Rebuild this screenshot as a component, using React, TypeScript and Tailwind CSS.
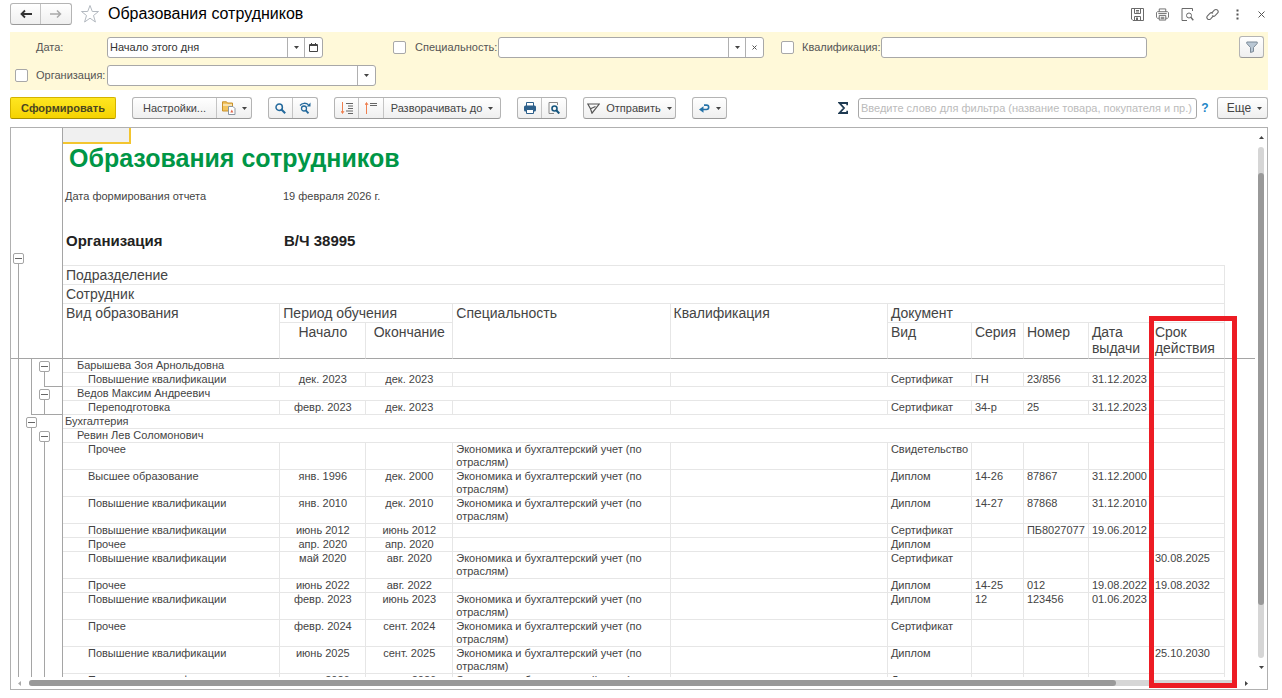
import React from "react";
import clsx from "clsx";

type Doc = {
  kind: string;
  start?: string;
  end?: string;
  speciality?: string;
  doc: string;
  series?: string;
  number?: string;
  issued?: string;
  expires?: string;
};

type Row = { group: string; level: 0 | 1 } | Doc;

const ECONOMICS = "Экономика и бухгалтерский учет (по отраслям)";

const rows: Row[] = [
  { group: "Барышева Зоя Арнольдовна", level: 1 },
  { kind: "Повышение квалификации", start: "дек. 2023", end: "дек. 2023", doc: "Сертификат", series: "ГН", number: "23/856", issued: "31.12.2023" },
  { group: "Ведов Максим Андреевич", level: 1 },
  { kind: "Переподготовка", start: "февр. 2023", end: "дек. 2023", doc: "Сертификат", series: "34-р", number: "25", issued: "31.12.2023" },
  { group: "Бухгалтерия", level: 0 },
  { group: "Ревин Лев Соломонович", level: 1 },
  { kind: "Прочее", speciality: ECONOMICS, doc: "Свидетельство" },
  { kind: "Высшее образование", start: "янв. 1996", end: "дек. 2000", speciality: ECONOMICS, doc: "Диплом", series: "14-26", number: "87867", issued: "31.12.2000" },
  { kind: "Повышение квалификации", start: "янв. 2010", end: "дек. 2010", speciality: ECONOMICS, doc: "Диплом", series: "14-27", number: "87868", issued: "31.12.2010" },
  { kind: "Повышение квалификации", start: "июнь 2012", end: "июнь 2012", doc: "Сертификат", number: "ПБ8027077", issued: "19.06.2012" },
  { kind: "Прочее", start: "апр. 2020", end: "апр. 2020", doc: "Диплом" },
  { kind: "Повышение квалификации", start: "май 2020", end: "авг. 2020", speciality: ECONOMICS, doc: "Сертификат", expires: "30.08.2025" },
  { kind: "Прочее", start: "июнь 2022", end: "авг. 2022", doc: "Диплом", series: "14-25", number: "012", issued: "19.08.2022", expires: "19.08.2032" },
  { kind: "Повышение квалификации", start: "февр. 2023", end: "июнь 2023", speciality: ECONOMICS, doc: "Диплом", series: "12", number: "123456", issued: "01.06.2023" },
  { kind: "Прочее", start: "февр. 2024", end: "сент. 2024", speciality: ECONOMICS, doc: "Сертификат" },
  { kind: "Повышение квалификации", start: "июнь 2025", end: "сент. 2025", speciality: ECONOMICS, doc: "Диплом", expires: "25.10.2030" },
  { kind: "Повышение квалификации", start: "июнь 2026", end: "июнь 2026", speciality: ECONOMICS, doc: "Диплом" },
];

function Caret({ className = "" }: { className?: string }) {
  return (
    <svg className={clsx("h-[3px] w-[5px] shrink-0", className)} viewBox="0 0 5 3" fill="#444">
      <path d="M0 0h5L2.5 3z" />
    </svg>
  );
}

function ToolButton({ label, className, children }: { label?: string; className?: string; children: React.ReactNode }) {
  return (
    <button
      type="button"
      aria-label={label}
      className={clsx("flex h-5 items-center justify-center gap-1.5 whitespace-nowrap", className)}
    >
      {children}
    </button>
  );
}

function ToolGroup({ className, children }: { className?: string; children: React.ReactNode }) {
  return (
    <div
      className={clsx(
        "flex shrink-0 divide-x divide-[#c4c4c4] rounded-[3px] border border-[#b4b4b4] border-b-[#999] bg-linear-to-b from-white to-[#efefef]",
        className,
      )}
    >
      {children}
    </div>
  );
}

function Field({ id, value = "", className, children }: { id: string; value?: string; className?: string; children?: React.ReactNode }) {
  return (
    <div className={clsx("flex h-[21px] divide-x divide-[#b0b0b0] rounded-[3px] border border-[#a8a8a8] bg-white", className)}>
      <input id={id} type="text" defaultValue={value} className="min-w-0 flex-1 bg-transparent px-0.5 text-[#333] outline-none" />
      {children}
    </div>
  );
}

function FieldButton({ label, children }: { label: string; children: React.ReactNode }) {
  return (
    <button type="button" aria-label={label} className="flex w-[17px] items-center justify-center">
      {children}
    </button>
  );
}

function FilterCheck({ label }: { label: string }) {
  return (
    <input
      type="checkbox"
      aria-label={label}
      className="h-[13px] w-[13px] shrink-0 appearance-none rounded-[2px] border border-[#a8a8a8] bg-white"
    />
  );
}

function TitleBar() {
  return (
    <header className="flex h-7 items-center pr-px">
      <ToolGroup>
        <ToolButton label="Назад" className="w-[30px]">
          <svg className="h-2.5 w-3" viewBox="0 0 12 10" fill="none" stroke="#333" strokeWidth="1.8">
            <path d="M5 1.500 1.500 5 5 8.500M1.500 5H12" />
          </svg>
        </ToolButton>
        <ToolButton label="Вперед" className="w-[30px]">
          <svg className="h-2.5 w-3" viewBox="0 0 12 10" fill="none" stroke="#a9a9a9" strokeWidth="1.5">
            <path d="M7 1.500 10.500 5 7 8.500M10.500 5H0" />
          </svg>
        </ToolButton>
      </ToolGroup>
      <button type="button" aria-label="Избранное" className="ml-2">
        <svg className="h-5 w-5" viewBox="0 0 20 20" fill="none" stroke="#b3b9c0" strokeWidth="1">
          <path d="M10 1.500l2.300 6h6.200l-5 4 1.900 6.500L10 14.200 4.600 18l1.900-6.500-5-4h6.200z" />
        </svg>
      </button>
      <h1 className="ml-2 text-base text-black">Образования сотрудников</h1>

      <div className="ml-auto flex items-center gap-3 text-[#6a6a6a]">
        <button type="button" aria-label="Сохранить">
          <svg className="h-[13px] w-[13px]" viewBox="0 0 13 13" fill="none" stroke="currentColor">
            <path d="M.5.5h12v12H2L.5 11zM3.500.5v5h6v-5M5 2.500h3M5 4h3M3.500 12.500v-4h6v4" />
            <path d="M5 9.500h2v2.500H5z" fill="currentColor" stroke="none" />
          </svg>
        </button>
        <button type="button" aria-label="Печать">
          <svg className="h-[13px] w-[13px]" viewBox="0 0 14 13" fill="none" stroke="currentColor">
            <path d="M3.500 3.500v-3h7v3M3.500 10.500h-2l-1-1v-5l1-1h11l1 1v5l-1 1h-2M3.500 7.500h7v5h-7zM2.500 5.500h9M5 9.500h4M5 11h4" />
          </svg>
        </button>
        <button type="button" aria-label="Предварительный просмотр">
          <svg className="h-[13px] w-[13px]" viewBox="0 0 13 13" fill="none" stroke="currentColor">
            <path d="M6 12.500H1V.5h10.500V3" />
            <circle cx="8" cy="7.500" r="2.500" />
            <path d="M9.800 9.300 12.300 12.300" strokeWidth="1.400" />
          </svg>
        </button>
        <button type="button" aria-label="Получить ссылку">
          <svg className="h-[13px] w-[13px]" viewBox="0 0 14 14" fill="none" stroke="currentColor" strokeWidth="1.200">
            <path d="M6 5.500 9 2.300c1-1 2.500-1 3.400 0s.9 2.300 0 3.200L9.800 8.200c-1 1-2.300.9-3.200.1" />
            <path d="M8 8.500 5 11.700c-1 1-2.500 1-3.400 0s-.9-2.300 0-3.200l2.600-2.700c1-1 2.300-.9 3.200-.1" />
          </svg>
        </button>
        <button type="button" aria-label="Дополнительно" className="flex w-3 justify-center">
          <svg className="h-[11px] w-[3px]" viewBox="0 0 3 11" fill="#555">
            <path d="M.5.5h2v2h-2zM.5 4.500h2v2h-2zM.5 8.500h2v2h-2z" />
          </svg>
        </button>
        <button type="button" aria-label="Закрыть" className="flex w-3 justify-center">
          <svg className="h-[7px] w-[7px]" viewBox="0 0 7 7" stroke="#555">
            <path d="M.5.5l6 6M6.500.5l-6 6" />
          </svg>
        </button>
      </div>
    </header>
  );
}

function Filters() {
  return (
    <section className="mt-1 flex flex-col gap-[7px] bg-[#fff9d9] py-1 pr-1 text-[#555]">
      <div className="flex items-center">
        <label htmlFor="date" className="w-[97px] pl-[26px]">Дата:</label>
        <Field id="date" value="Начало этого дня" className="w-[216px]">
          <FieldButton label="Выбрать из списка"><Caret /></FieldButton>
          <FieldButton label="Календарь">
            <svg className="h-[9px] w-[9px]" viewBox="0 0 9 9" fill="none" stroke="#444">
              <path d="M.5 1.500h8v7h-8z" />
              <path d="M.5 2.500h8M2.500 0v2M6.500 0v2" />
            </svg>
          </FieldButton>
        </Field>
        <div className="ml-[70px] flex items-center">
          <FilterCheck label="Отбор по специальности" />
          <label htmlFor="speciality" className="ml-[9px] w-[83px]">Специальность:</label>
          <Field id="speciality" className="w-[266px]">
            <FieldButton label="Выбрать из списка"><Caret /></FieldButton>
            <FieldButton label="Очистить">
              <svg className="h-[5px] w-[5px]" viewBox="0 0 5 5" stroke="#555">
                <path d="M.5.5l4 4M4.500.5l-4 4" />
              </svg>
            </FieldButton>
          </Field>
        </div>
        <div className="ml-[17px] flex items-center">
          <FilterCheck label="Отбор по квалификации" />
          <label htmlFor="qualification" className="ml-2 w-[79px]">Квалификация:</label>
          <Field id="qualification" className="w-[266px]" />
        </div>
        <ToolGroup className="ml-auto">
          <ToolButton label="Настройка отбора" className="w-[23px]">
            <svg className="h-3 w-3" viewBox="0 0 12 12" fill="#b9c7d4" stroke="#7d8b98">
              <path d="M.8 1h10.400v1.500L7.500 6.500v4l-3 1v-5L.8 2.500z" />
            </svg>
          </ToolButton>
        </ToolGroup>
      </div>
      <div className="flex items-center pl-[5px]">
        <FilterCheck label="Отбор по организации" />
        <label htmlFor="organization" className="w-[79px] pl-2">Организация:</label>
        <Field id="organization" className="w-[269px]">
          <FieldButton label="Выбрать из списка"><Caret /></FieldButton>
        </Field>
      </div>
    </section>
  );
}

function Toolbar() {
  return (
    <div className="flex items-center pt-[7px] pb-2 text-[#444]">
      <button
        type="button"
        className="h-[22px] w-[106px] shrink-0 rounded-[2px] border border-[#d3b300] border-b-[#a88f00] bg-linear-to-b from-[#ffe61f] to-[#f5d300] font-bold text-[#4a4520]"
      >
        Сформировать
      </button>
      <ToolGroup className="ml-4">
        <ToolButton className="w-[84px]">Настройки...</ToolButton>
        <ToolButton label="Варианты отчета" className="w-[34px]">
          <svg className="h-[14px] w-[14px]" viewBox="0 0 14 14">
            <path d="M.5 2V.8h4L5.500 2h5v8H.5z" fill="#f3c45d" stroke="#c8912c" />
            <path d="M1 4h9" stroke="#fff" />
            <path d="M6.500 5.500h4.500l2 2v6H6.500z" fill="#fff" stroke="#8b95a0" />
            <path d="M8.300 11.500 9.800 8.500l1.500 3z" fill="#e0664c" />
          </svg>
          <Caret />
        </ToolButton>
      </ToolGroup>
      <ToolGroup className="ml-4">
        <ToolButton label="Найти" className="w-6">
          <svg className="h-[11px] w-[11px]" viewBox="0 0 11 11" fill="none" stroke="#23699c">
            <circle cx="4.200" cy="4.200" r="3.200" strokeWidth="1.500" />
            <path d="M6.500 6.500 10.200 10.200" strokeWidth="2" />
          </svg>
        </ToolButton>
        <ToolButton label="Найти далее" className="w-6">
          <svg className="h-3 w-3" viewBox="0 0 12 12" fill="none" stroke="#23699c">
            <circle cx="5" cy="6.500" r="2.500" strokeWidth="1.300" />
            <path d="M6.800 8.300 9.500 11.300" strokeWidth="1.800" />
            <path d="M1 3.500C3 .8 7 .5 9.500 2.800" strokeWidth="1.300" />
            <path d="M11.500.5v4H7.800z" fill="#23699c" stroke="none" />
          </svg>
        </ToolButton>
      </ToolGroup>
      <ToolGroup className="ml-4">
        <ToolButton label="Развернуть группы" className="w-6">
          <svg className="h-3 w-3" viewBox="0 0 12 12" fill="none" stroke="#666">
            <path d="M1.500 0v11M0 9l1.500 2.500L3 9" stroke="#ef7f4f" />
            <path d="M5 1.500h7M7 4h5M7 6.500h5M5 9h7M7 11.500h5" />
          </svg>
        </ToolButton>
        <ToolButton label="Свернуть группы" className="w-[25px]">
          <svg className="h-3 w-3" viewBox="0 0 12 12" fill="none" stroke="#666">
            <path d="M1.500 12V1M0 3 1.500.5 3 3" stroke="#ef7f4f" />
            <path d="M5 1.500h7M5 3.500h7" />
          </svg>
        </ToolButton>
        <ToolButton className="w-[116px]">Разворачивать до <Caret /></ToolButton>
      </ToolGroup>
      <ToolGroup className="ml-4">
        <ToolButton label="Печать" className="w-6">
          <svg className="h-3 w-3" viewBox="0 0 12 12">
            <path d="M2.500 4V.5h7V4" fill="#fff" stroke="#2c5f8a" />
            <rect y="3.500" width="12" height="6" rx="1.500" fill="#2c5f8a" />
            <path d="M2.500 7.500h7v4h-7z" fill="#fff" stroke="#2c5f8a" />
          </svg>
        </ToolButton>
        <ToolButton label="Просмотр" className="w-6">
          <svg className="h-3 w-3" viewBox="0 0 12 12" fill="none">
            <path d="M6 11.500H1V.5h8.500V3" stroke="#888" />
            <circle cx="6.500" cy="6.500" r="2.500" stroke="#17577f" strokeWidth="1.600" />
            <path d="M8.300 8.300 11.300 11.500" stroke="#17577f" strokeWidth="2" />
          </svg>
        </ToolButton>
      </ToolGroup>
      <ToolGroup className="ml-4">
        <ToolButton className="w-[91px]">
          <svg className="h-[11px] w-[13px] shrink-0" viewBox="0 0 13 11" fill="none" stroke="#555" strokeWidth="1.200">
            <path d="M.8 1h11.400L5 10.200 3.500 5.800zM3.500 5.800 8.500 3.500" />
          </svg>
          Отправить <Caret />
        </ToolButton>
      </ToolGroup>
      <ToolGroup className="ml-4">
        <ToolButton label="Навигация" className="w-[33px]">
          <svg className="h-[9px] w-[11px]" viewBox="0 0 11 9" fill="none" stroke="#2472a8" strokeWidth="1.600">
            <path d="M2 5.500h5.500a2.200 2.200 0 0 0 0-4.400H5" />
            <path d="M4.500 2.200v6.500L0 5.500z" fill="#2472a8" stroke="none" />
          </svg>
          <Caret />
        </ToolButton>
      </ToolGroup>

      <div className="ml-auto flex items-center text-xs">
        <svg className="h-3 w-2.5" viewBox="0 0 10 12" fill="none" stroke="#1f3a52" strokeWidth="1.800">
          <path d="M9.200 3.200V1H1.500L6 6l-4.500 5h7.700V8.800" />
        </svg>
        <input
          type="text"
          aria-label="Фильтр"
          placeholder="Введите слово для фильтра (название товара, покупателя и пр.)"
          className="ml-2.5 h-[21px] w-[339px] rounded-[3px] border border-[#a8a8a8] px-0.5 text-[11px] outline-none placeholder:text-[#bbb]"
        />
        <button type="button" className="w-5 pr-1 font-bold text-[#1f86c7]">?</button>
        <ToolGroup>
          <ToolButton className="w-[49px] pl-1">Еще <Caret /></ToolButton>
        </ToolGroup>
      </div>
    </div>
  );
}

function Fold() {
  return (
    <button
      type="button"
      aria-label="Свернуть"
      className="flex h-[11px] w-[11px] shrink-0 items-center justify-center rounded-[2px] border border-[#a5a5a5] bg-white"
    >
      <span className="h-px w-[7px] bg-[#666]" />
    </button>
  );
}

// One vertical lane of the grouping tree, 11px wide with the line in its middle
function Lane({ children }: { children: React.ReactNode }) {
  return <div className="flex w-[11px] shrink-0 flex-col">{children}</div>;
}

function Outline() {
  const line = "ml-[5px] border-l border-[#a5a5a5]";
  return (
    <div className="flex w-[52px] shrink-0 flex-col border-r border-[#a5a5a5]">
      <div className="h-[231px] shrink-0 border-b border-[#a5a5a5] pt-[125px] pl-0.5">
        <div className="flex h-full">
          <Lane>
            <Fold />
            <div className={clsx(line, "flex-1")} />
          </Lane>
        </div>
      </div>
      <div className="flex min-h-0 flex-1 gap-0.5 pl-0.5">
        <Lane>
          <div className={clsx(line, "flex-1")} />
        </Lane>
        <Lane>
          <div className={clsx(line, "h-14 w-[31px] border-b")} />
          <div className="h-0.5" />
          <Fold />
          <div className={clsx(line, "flex-1")} />
        </Lane>
        <Lane>
          <div className="h-0.5" />
          <Fold />
          <div className={clsx(line, "h-[15px] w-[18px] border-b")} />
          <div className="h-0.5" />
          <Fold />
          <div className={clsx(line, "h-[15px]")} />
          <div className="h-4" />
          <Fold />
          <div className={clsx(line, "flex-1")} />
        </Lane>
      </div>
    </div>
  );
}

const cell = "border-r border-b border-[#e6e6e6] px-[3px] align-top";

function DocRow({ row }: { row: Doc }) {
  return (
    <tr>
      <td className="border-r border-b border-[#e6e6e6] pr-[3px] pl-[25px] align-top">{row.kind}</td>
      <td className={clsx(cell, "text-center")}>{row.start}</td>
      <td className={clsx(cell, "text-center")}>{row.end}</td>
      <td className={cell}>{row.speciality && <div className="max-w-[190px]">{row.speciality}</div>}</td>
      <td className={cell} />
      <td className={cell}>{row.doc}</td>
      <td className={cell}>{row.series}</td>
      <td className={cell}>{row.number}</td>
      <td className={cell}>{row.issued}</td>
      <td className={cell}>{row.expires}</td>
      <td />
    </tr>
  );
}

function ReportTable() {
  const frozen = "border-r border-r-[#e6e6e6] border-b border-b-[#a5a5a5] px-[3px] align-top";
  return (
    <table className="w-full table-fixed border-separate border-spacing-0 text-left text-[11px] leading-[13px] whitespace-nowrap">
      <colgroup>
        <col />
        <col className="w-[86px]" />
        <col className="w-[87px]" />
        <col />
        <col />
        <col className="w-[84px]" />
        <col className="w-[52px]" />
        <col className="w-[65px]" />
        <col className="w-[63px]" />
        <col className="w-[73px]" />
        <col className="w-[30px]" />
      </colgroup>
      <thead className="text-sm leading-[18px] text-[#444] [&_th]:font-normal">
        <tr>
          <th colSpan={10} className="border-t border-r border-b border-[#e6e6e6] px-[3px]">Подразделение</th>
          <th />
        </tr>
        <tr>
          <th colSpan={10} className={cell}>Сотрудник</th>
          <th />
        </tr>
        <tr>
          <th rowSpan={2} className={frozen}>Вид образования</th>
          <th colSpan={2} className={cell}>Период обучения</th>
          <th rowSpan={2} className={frozen}>Специальность</th>
          <th rowSpan={2} className={frozen}>Квалификация</th>
          <th colSpan={5} className={cell}>Документ</th>
          <th />
        </tr>
        <tr className="h-9 leading-4 [&>th]:pt-px">
          <th className={clsx(frozen, "text-center")}>Начало</th>
          <th className={clsx(frozen, "text-center")}>Окончание</th>
          <th className={frozen}>Вид</th>
          <th className={frozen}>Серия</th>
          <th className={frozen}>Номер</th>
          <th className={frozen}>Дата<br />выдачи</th>
          <th className={frozen}>Срок<br />действия</th>
          <th className="border-b border-[#a5a5a5]" />
        </tr>
      </thead>
      <tbody className="text-[#444] [&_td]:whitespace-normal">
        {rows.map((row, i) =>
          "group" in row ? (
            <tr key={i}>
              <td colSpan={10} className={clsx("border-r border-b border-[#e6e6e6]", row.level ? "pl-3.5" : "pl-0.5")}>
                {row.group}
              </td>
              <td />
            </tr>
          ) : (
            <DocRow key={i} row={row} />
          ),
        )}
      </tbody>
    </table>
  );
}

function VerticalScroll() {
  return (
    <div className="flex w-3 shrink-0 flex-col items-center pt-2">
      <svg className="h-[3px] w-[5px]" viewBox="0 0 5 3" fill="#444"><path d="M0 3h5L2.500 0z" /></svg>
      <div className="mt-2 flex w-1.5 flex-1 flex-col rounded-full bg-[#d6d6d6] pt-[26px]">
        <div className="h-[89%] rounded-full bg-[#999]" />
      </div>
      <Caret className="mt-2 mb-2" />
    </div>
  );
}

function HorizontalScroll() {
  return (
    <div className="flex h-3 shrink-0 items-center pr-[19px] pl-[7px]">
      <svg className="h-[5px] w-[3px]" viewBox="0 0 3 5" fill="#aaa"><path d="M3 0v5L0 2.500z" /></svg>
      <div className="mx-2 h-1.5 flex-1 rounded-full bg-[#d6d6d6]">
        <div className="h-full w-[90%] rounded-full bg-[#999]" />
      </div>
      <svg className="h-[5px] w-[3px]" viewBox="0 0 3 5" fill="#444"><path d="M0 0v5l3-2.500z" /></svg>
    </div>
  );
}

function Sheet() {
  return (
    <main className="relative flex min-h-0 flex-1 flex-col border border-[#b0b0b0]">
      <div className="flex min-h-0 flex-1">
        <Outline />
        <div className="min-w-0 flex-1 overflow-hidden">
          {/* Selected empty cell */}
          <div className="h-4 w-[68px] border-r-2 border-b-2 border-[#f3c52f] bg-[#f0f0f0]" />
          <h2 className="pl-1.5 text-[25px] leading-7 font-bold text-[#009646]">Образования сотрудников</h2>
          <div className="mt-[17px] flex pl-0.5 text-[11px] leading-[14px] text-[#444]">
            <span className="w-[218px]">Дата формирования отчета</span>
            <span>19 февраля 2026 г.</span>
          </div>
          <div className="mt-7 mb-3.5 flex pl-[3px] text-[15px] leading-5 font-bold text-[#222]">
            <span className="w-[218px]">Организация</span>
            <span>В/Ч 38995</span>
          </div>
          <ReportTable />
        </div>
        <VerticalScroll />
      </div>
      <HorizontalScroll />
      {/* Marker around the expiry column */}
      <div className="pointer-events-none absolute top-[188px] right-[30px] bottom-px w-[88px] border-[5px] border-[#ed1c24]" />
    </main>
  );
}

export default function App() {
  return (
    <div className="flex h-screen flex-col bg-white px-2.5 pb-2 font-['Liberation_Sans',Arial,sans-serif] text-[11px]">
      <div className="mr-1 flex min-h-0 flex-1 flex-col">
        <TitleBar />
        <Filters />
        <Toolbar />
        <Sheet />
      </div>
    </div>
  );
}
